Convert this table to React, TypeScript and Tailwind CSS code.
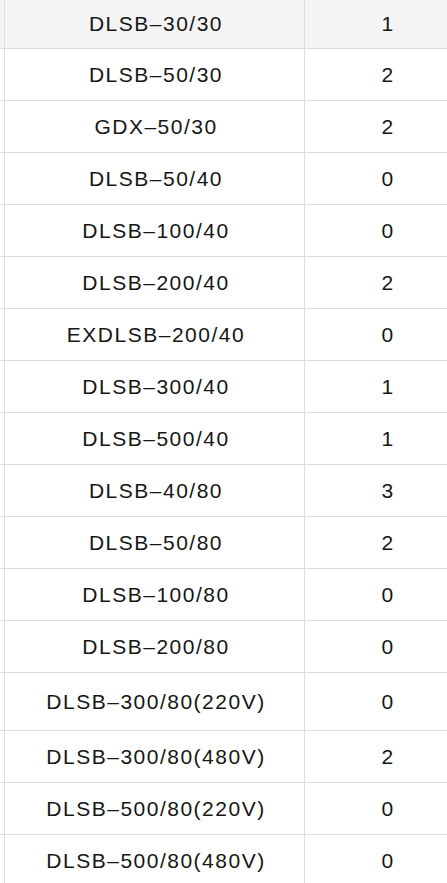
const rows = [
  { model: "DLSB–30/30", qty: "1", h: "h-[49px]", active: true },
  { model: "DLSB–50/30", qty: "2", h: "h-[52px]" },
  { model: "GDX–50/30", qty: "2", h: "h-[52px]" },
  { model: "DLSB–50/40", qty: "0", h: "h-[52px]" },
  { model: "DLSB–100/40", qty: "0", h: "h-[52px]" },
  { model: "DLSB–200/40", qty: "2", h: "h-[52px]" },
  { model: "EXDLSB–200/40", qty: "0", h: "h-[52px]" },
  { model: "DLSB–300/40", qty: "1", h: "h-[52px]" },
  { model: "DLSB–500/40", qty: "1", h: "h-[52px]" },
  { model: "DLSB–40/80", qty: "3", h: "h-[52px]" },
  { model: "DLSB–50/80", qty: "2", h: "h-[52px]" },
  { model: "DLSB–100/80", qty: "0", h: "h-[52px]" },
  { model: "DLSB–200/80", qty: "0", h: "h-[52px]" },
  { model: "DLSB–300/80(220V)", qty: "0", h: "h-[58px]" },
  { model: "DLSB–300/80(480V)", qty: "2", h: "h-[52px]" },
  { model: "DLSB–500/80(220V)", qty: "0", h: "h-[52px]" },
  { model: "DLSB–500/80(480V)", qty: "0", h: "h-[52px]" },
];

const App = () => {
  return (
    <div
      className="w-[447px] h-[883px] overflow-hidden bg-white text-[21px] text-[#161616] tracking-[1.5px]"
      style={{ fontFamily: '"Liberation Sans", Arial, sans-serif' }}
    >
      {rows.map((row, index) => (
        <div
          key={index}
          className={`flex pl-1 border-b border-[#dcdcdc] ${row.h} ${row.active ? "bg-[#f4f4f4]" : "bg-white"}`}
        >
          {/* model */}
          <div className="shrink-0 w-[301px] border-x border-[#dcdcdc] flex items-center justify-center pl-[3px]">
            {row.model}
          </div>
          {/* qty */}
          <div className="shrink-0 w-[166px] flex items-center justify-center">
            {row.qty}
          </div>
        </div>
      ))}
    </div>
  );
};

export default App;
